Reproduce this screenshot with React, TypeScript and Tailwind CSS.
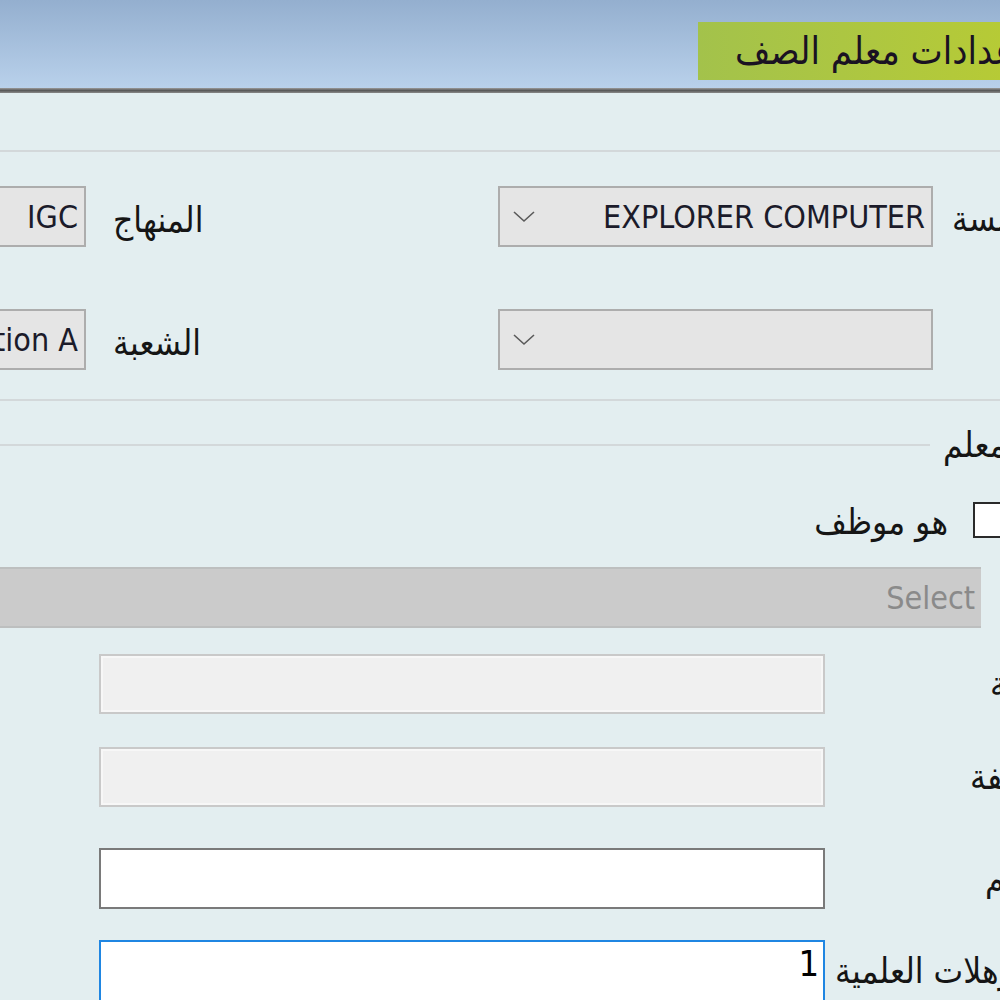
import React from 'react';

const font = { fontFamily: '"DejaVu Sans Condensed", "DejaVu Sans", Tahoma, sans-serif' };

function Chevron() {
  return (
    <svg width="24" height="14" viewBox="0 0 24 14" className="shrink-0">
      <path d="M2 2 L12 11 L22 2" fill="none" stroke="#5a5a5a" strokeWidth="1.6" />
    </svg>
  );
}

function Combo({ value }: { value?: string }) {
  return (
    <div className="w-[435px] h-full shrink-0 flex items-center bg-[#e5e5e5] border-2 border-[#adadad] pl-[12px] pr-[6px]">
      <Chevron />
      <span className="flex-1 text-right text-[32px] text-[#1b1b2a] whitespace-nowrap">{value}</span>
    </div>
  );
}

function SideBox({ value }: { value: string }) {
  return (
    <div className="-ml-[80px] w-[166px] h-full shrink-0 flex items-center justify-end bg-[#e5e5e5] border-2 border-[#adadad] pr-[6px] overflow-hidden">
      <span className="text-[32px] text-[#1b1b2a] whitespace-nowrap">{value}</span>
    </div>
  );
}

function Label({ children, className = '' }: { children: React.ReactNode; className?: string }) {
  return (
    <span dir="rtl" className={`shrink-0 text-[35px] text-[#151515] whitespace-nowrap leading-none ${className}`}>
      {children}
    </span>
  );
}

export default function App() {
  return (
    <div className="w-[1000px] h-[1000px] overflow-hidden bg-[#e3eef0]" style={font}>
      {/* Title bar */}
      <div className="h-[88px] bg-gradient-to-b from-[#94afcf] to-[#b9d1eb] pt-[22px] flex">
        <div className="ml-[698px] w-[400px] h-[58px] shrink-0 flex items-center pl-[37px] bg-gradient-to-r from-[#a3c24b] to-[#bccd2c]">
          <span dir="rtl" className="text-[38px] leading-none text-[#1a1222] whitespace-nowrap">إعدادات معلم الصف</span>
        </div>
      </div>
      <div className="h-[5px] bg-gradient-to-b from-[#9c9c9c] via-[#5a5a5a] to-[#8a8a8a]" />

      {/* Body */}
      <div className="h-[2px] mt-[57px] bg-[#d3d8da]" />

      <div className="mt-[34px] h-[61px] flex items-center">
        <SideBox value="IGC" />
        <div className="ml-[27px] w-[385px] shrink-0 pt-[8px]">
          <Label>المنهاج</Label>
        </div>
        <Combo value="EXPLORER COMPUTER" />
        <Label className="ml-[19px] pt-[6px]">المؤسسة</Label>
      </div>

      <div className="mt-[62px] h-[61px] flex items-center">
        <SideBox value="Section A" />
        <div className="ml-[27px] w-[385px] shrink-0 pt-[8px]">
          <Label>الشعبة</Label>
        </div>
        <Combo />
      </div>

      <div className="h-[2px] mt-[29px] bg-[#d3d8da]" />

      <div className="mt-[27px] h-[34px] flex items-center">
        <div className="w-[930px] h-[2px] shrink-0 bg-[#d3d8da]" />
        <Label className="ml-[13px]">المعلم</Label>
      </div>

      <div className="mt-[40px] h-[36px] flex items-center">
        <div className="w-[948px] shrink-0 flex justify-end pt-[4px]">
          <Label>هو موظف</Label>
        </div>
        <div className="ml-[25px] w-[38px] h-[36px] shrink-0 bg-white border-2 border-[#2a2a2a]" />
      </div>

      <div className="mt-[29px] w-[981px] h-[61px] flex items-center justify-end pr-[6px] bg-[#cbcbcb] border-y-2 border-[#bdbfbf]">
        <span className="text-[32px] text-[#8a8a8a]">Select</span>
      </div>

      <div className="mt-[26px] h-[60px] flex items-center">
        <div className="ml-[99px] w-[726px] h-full shrink-0 bg-[#f0f0f0] border-2 border-[#c9c9c9] shadow-[inset_0_0_0_2px_#f7f7f7]" />
        <Label className="ml-[165px]">الهوية</Label>
      </div>

      <div className="mt-[33px] h-[60px] flex items-center">
        <div className="ml-[99px] w-[726px] h-full shrink-0 bg-[#f0f0f0] border-2 border-[#c9c9c9] shadow-[inset_0_0_0_2px_#f7f7f7]" />
        <Label className="ml-[145px]">الوظيفة</Label>
      </div>

      <div className="mt-[41px] h-[61px] flex items-center">
        <div className="ml-[99px] w-[726px] h-full shrink-0 bg-white border-2 border-[#7a7a7a]" />
        <Label className="ml-[160px]">الاسم</Label>
      </div>

      <div className="mt-[31px] h-[70px] flex items-start">
        <div className="ml-[99px] w-[726px] h-full shrink-0 bg-white border-2 border-[#1f86e2] flex justify-end pr-[4px] pt-[4px]">
          <span className="text-[36px] leading-none text-black">1</span>
        </div>
        <Label className="ml-[10px] mt-[14px]">المؤهلات العلمية</Label>
      </div>
    </div>
  );
}
